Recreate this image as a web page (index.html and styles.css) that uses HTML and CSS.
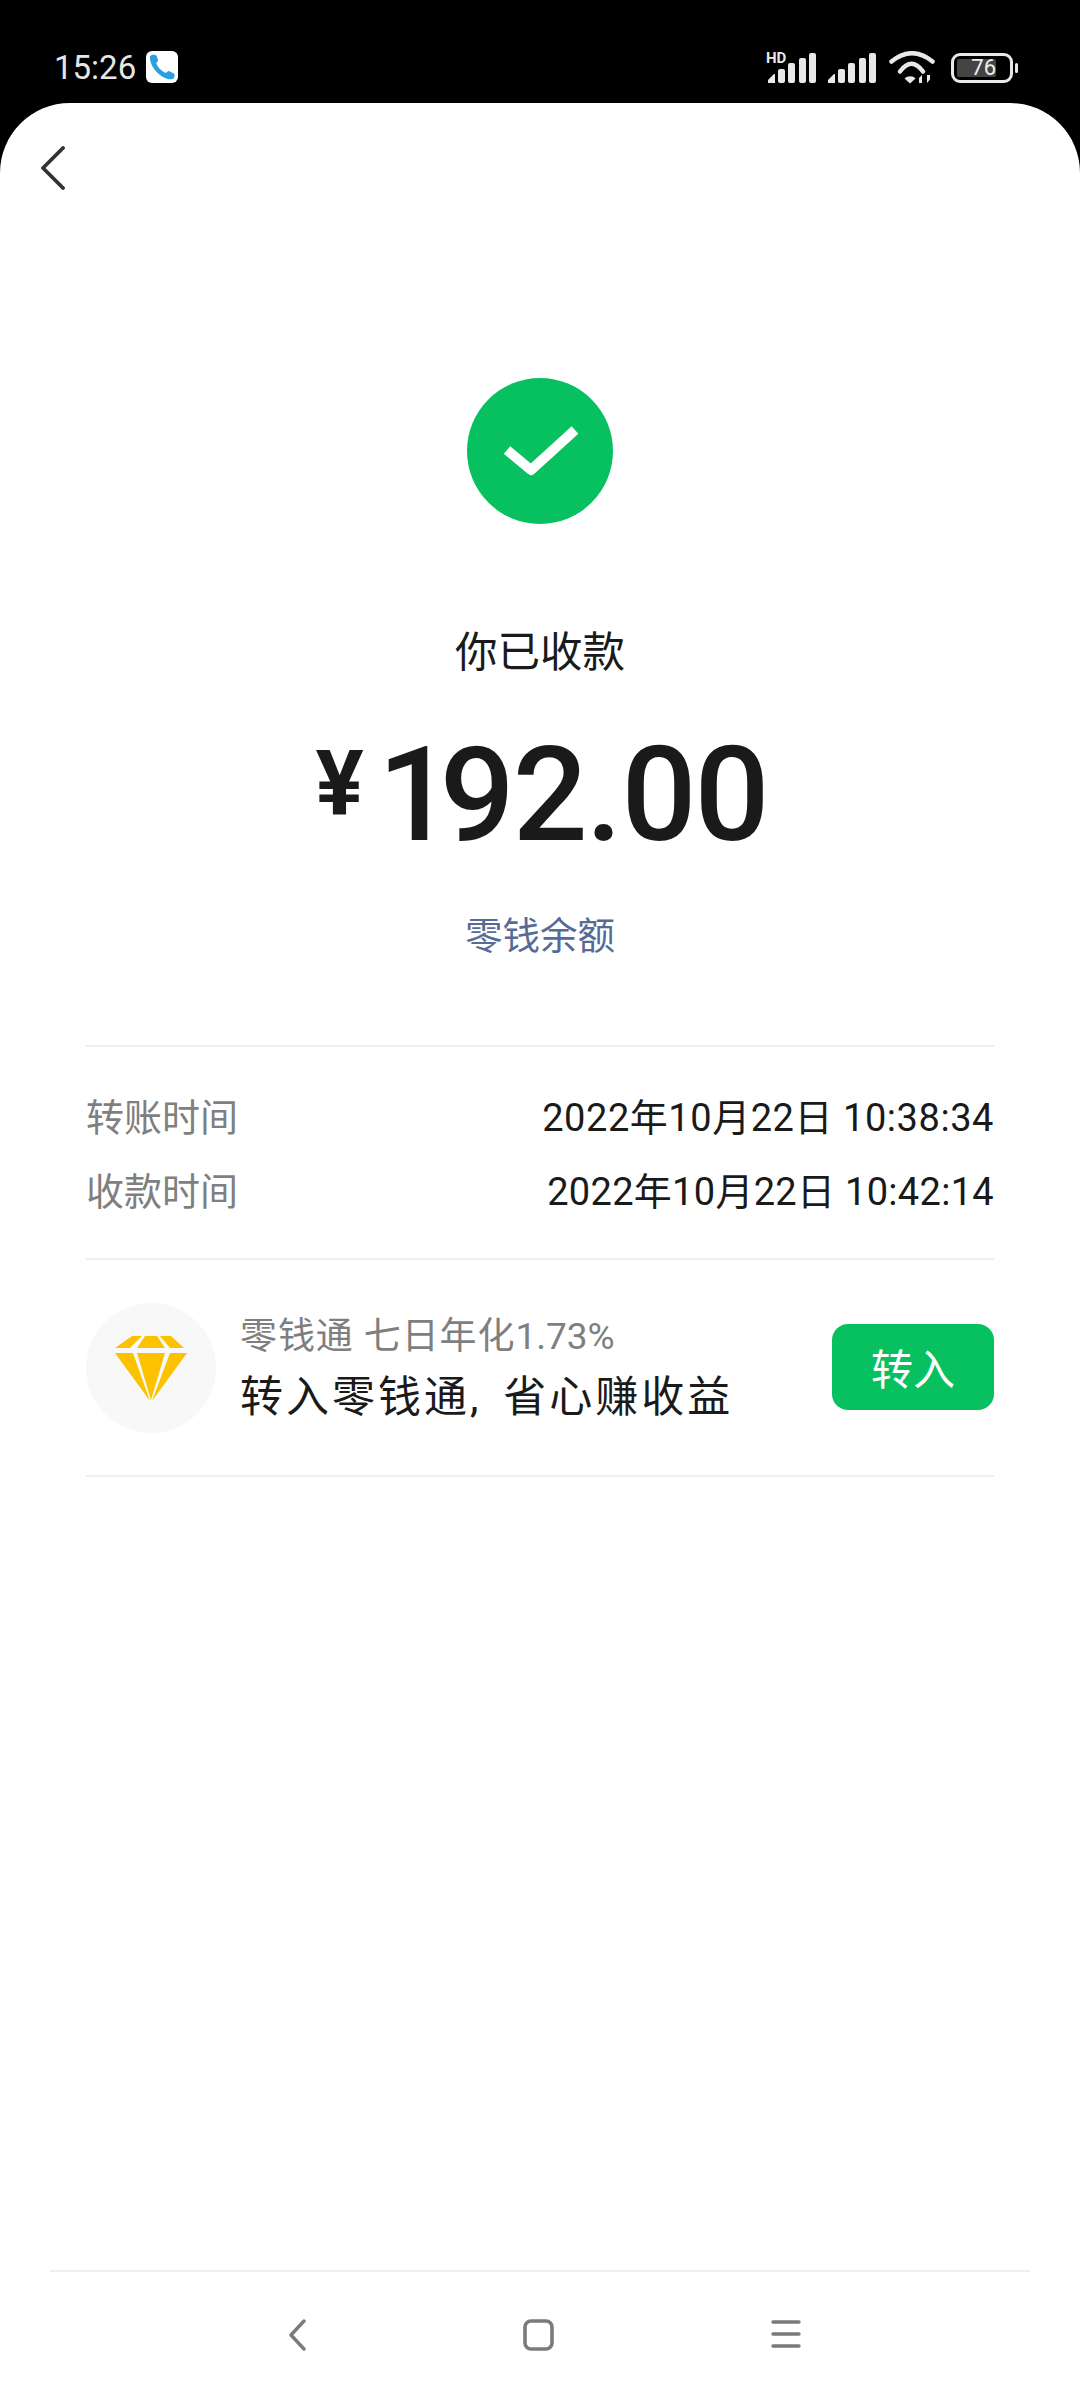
FILE: index.html
```html
<!DOCTYPE html>
<html lang="zh-CN">
<head>
<meta charset="utf-8">
<title>你已收款</title>
<link rel="stylesheet" href="styles.css">
</head>
<body>
<div class="phone">
  <header class="status">
    <div class="status-left">
      <span class="clock">15:26</span>
      <svg class="call" width="32" height="32" viewBox="0 0 32 32"><rect width="32" height="32" rx="6" fill="#fff"/><path d="M4 5.500C5 3.500 9 3 10.500 4.500L12 9C12.200 10 11 11.500 10.200 12C11 15.500 15.500 20.500 20 22C20.800 21 22 19.800 23 20L28 22.500C29 23.500 28.800 27 27 28C18 30.500 3 17 4 5.500Z" fill="#2a9fe2"/></svg>
    </div>
    <div class="status-right">
      <div class="sig-wrap">
        <span class="hd">HD</span>
        <svg class="sig" width="48" height="30" viewBox="0 0 48 30"><g fill="#e8e8e8"><path d="M0 30V27L6 21H7V30Z"/><rect x="10" y="16" width="7" height="14" rx="2"/><rect x="20" y="10" width="7" height="20" rx="2"/><rect x="31" y="5" width="7" height="25" rx="2"/><rect x="41" y="0" width="7" height="30" rx="2"/></g></svg>
      </div>
      <svg class="sig" width="48" height="30" viewBox="0 0 48 30"><g fill="#e8e8e8"><path d="M0 30V27L6 21H7V30Z"/><rect x="10" y="16" width="7" height="14" rx="2"/><rect x="20" y="10" width="7" height="20" rx="2"/><rect x="31" y="5" width="7" height="25" rx="2"/><rect x="41" y="0" width="7" height="30" rx="2"/></g></svg>
      <svg class="wifi" width="46" height="33" viewBox="0 0 46 33"><g fill="none" stroke="#e8e8e8" stroke-width="4.500" stroke-linecap="round"><path d="M2.500 10.500Q23 -6 43.500 10.500"/><path d="M11 20.500Q22.500 5 34 20.500"/></g><path d="M15.500 27.500C18.500 24.500 24 24.500 26.500 27.500L21 32.500Z" fill="#e8e8e8"/><path d="M30 32V27L33 24V32ZM38 24H41V28.500L38 32Z" fill="#e8e8e8"/></svg>
      <div class="battery">
        <div class="batt-body"><span class="batt-fill">76</span></div>
        <span class="batt-nub"></span>
      </div>
    </div>
  </header>
  <main class="sheet">
    <svg class="back" width="24" height="44" viewBox="0 0 24 44"><path d="M22 2L2 22L22 42" fill="none" stroke="#333" stroke-width="3.800" stroke-linecap="round" stroke-linejoin="round"/></svg>
    <section class="hero">
      <svg class="ok" width="146" height="146" viewBox="0 0 146 146"><circle cx="73" cy="73" r="73" fill="#07c160"/><path d="M40 72L64 92L108 52" fill="none" stroke="#fff" stroke-width="10" stroke-linejoin="round"/></svg>
      <h1 class="title">你已收款</h1>
      <div class="amount"><span class="yen">¥</span><span class="num"><span class="one">1</span>92<span class="dot">.</span>00</span></div>
      <a class="balance">零钱余额</a>
    </section>
    <section class="details">
      <div class="row"><span class="key">转账时间</span><span class="val val-wide">2022年10月22日 10:38:34</span></div>
      <div class="row"><span class="key">收款时间</span><span class="val val-tight">2022年10月22日 10:42:14</span></div>
    </section>
    <section class="promo">
      <div class="gem">
        <svg width="72" height="66" viewBox="0 0 72 66"><g fill="#fcc200"><path d="M0 13L17 1H27L15 13Z"/><path d="M22 13L30 1H42L50 13Z"/><path d="M45 1H56L69 13H55Z"/><path d="M0 18H18L35 66Z"/><path d="M22 18H50L36 65Z"/><path d="M55 18H72L37 66Z"/></g></svg>
      </div>
      <div class="promo-text">
        <div class="promo-sub">零钱通 七日年化<span class="rate">1.73%</span></div>
        <div class="promo-main">转入零钱通, 省心赚收益</div>
      </div>
      <button class="cta">转入</button>
    </section>
    <div class="spacer"></div>
    <nav class="navbar">
      <svg width="17" height="32" viewBox="0 0 17 32"><path d="M15 2L2 16L15 30" fill="none" stroke="#7b7b7b" stroke-width="3.400" stroke-linecap="round" stroke-linejoin="round"/></svg>
      <svg width="31" height="32" viewBox="0 0 31 32"><rect x="2" y="2" width="27" height="28" rx="6" fill="none" stroke="#7b7b7b" stroke-width="3.600"/></svg>
      <svg width="30" height="30" viewBox="0 0 30 30"><g stroke="#7b7b7b" stroke-width="3.400" stroke-linecap="round"><path d="M2 3H28"/><path d="M2 15H28"/><path d="M2 27H28"/></g></svg>
    </nav>
  </main>
</div>
</body>
</html>
```

FILE: styles.css
```css
* { box-sizing: border-box; }
html, body { margin: 0; padding: 0; }
body { font-family: Roboto, "Noto Sans CJK SC", sans-serif; background: #000; }
.phone { width: 1080px; height: 2400px; display: flex; flex-direction: column; background: #000; overflow: hidden; }

.status { height: 103px; flex: none; padding: 32px 62px 0 54px; display: flex; justify-content: space-between; align-items: center; }
.status-left { display: flex; align-items: center; gap: 10px; }
.clock { font-size: 33px; line-height: 40px; color: #e6e6e6; }
.call { display: block; margin-top: -2px; }
.status-right { display: flex; align-items: center; gap: 12px; }
.sig-wrap { position: relative; display: flex; }
.sig { display: block; }
.hd { position: absolute; left: -2px; top: -2px; font-size: 15px; line-height: 14px; font-weight: 700; color: #e8e8e8; }
.wifi { display: block; margin-left: 1px; margin-right: 4px; }
.battery { display: flex; align-items: center; gap: 2px; }
.batt-body { width: 62px; height: 30px; border: 3px solid #e8e8e8; border-radius: 9px; padding: 3px; display: flex; }
.batt-fill { width: 39px; background: #444; border-radius: 2px; color: #eee; font-size: 22px; line-height: 18px; text-align: right; }
.batt-nub { width: 3px; height: 10px; background: #e8e8e8; border-radius: 2px; }

.sheet { flex: 1; background: #fff; border-radius: 70px 70px 0 0; display: flex; flex-direction: column; }
.back { display: block; margin: 43px 0 0 41px; flex: none; }
.hero { margin-top: 188px; display: flex; flex-direction: column; align-items: center; }
.ok { display: block; }
.title { margin: 99px 0 0; font-size: 42.500px; line-height: 60px; font-weight: 400; color: #1a1a1a; }
.amount { margin: 47px 0 0 3px; height: 130px; display: flex; align-items: flex-start; color: #1a1a1a; }
.yen { font-size: 90px; line-height: 100px; font-weight: 700; margin-right: 14px; margin-top: 5px; }
.num { font-size: 132px; line-height: 130px; font-weight: 500; letter-spacing: -2px; }
.one { letter-spacing: -13px; }
.dot { letter-spacing: -1px; }
.balance { margin-top: 51px; font-size: 37.500px; line-height: 50px; color: #576b95; }

.details { margin: 84px 86px 0; padding: 46px 0 41px; border-top: 2px solid #eee; border-bottom: 2px solid #eee; display: flex; flex-direction: column; gap: 24px; }
.row { display: flex; justify-content: space-between; align-items: center; height: 50px; }
.key { font-size: 38px; line-height: 50px; color: #7f7f7f; }
.val { font-size: 38px; line-height: 50px; color: #1a1a1a; }
.val-wide { letter-spacing: .55px; }
.val-tight { letter-spacing: .3px; }

.promo { margin: 0 86px; height: 217px; border-bottom: 2px solid #eee; display: flex; align-items: center; }
.gem { width: 130px; height: 130px; border-radius: 50%; background: #f8f8f8; display: flex; align-items: center; justify-content: center; flex: none; }
.gem svg { display: block; }
.promo-text { margin-left: 24px; flex: 1; display: flex; flex-direction: column; gap: 8px; }
.promo-sub { font-size: 37px; line-height: 50px; letter-spacing: .9px; color: #7f7f7f; }
.rate { letter-spacing: 0; }
.promo-main { font-size: 43px; line-height: 54px; letter-spacing: 3px; word-spacing: 8px; color: #1a1a1a; }
.cta { width: 162px; height: 86px; margin-top: -2px; border: 0; border-radius: 16px; background: #07c160; color: #fff; font: inherit; font-size: 42px; padding: 0; flex: none; }

.spacer { flex: 1; }
.navbar { margin: 0 50px; height: 130px; border-top: 2px solid #eee; padding: 47px 229px 0 239px; display: flex; justify-content: space-between; align-items: flex-start; }
.navbar svg { display: block; }
```
